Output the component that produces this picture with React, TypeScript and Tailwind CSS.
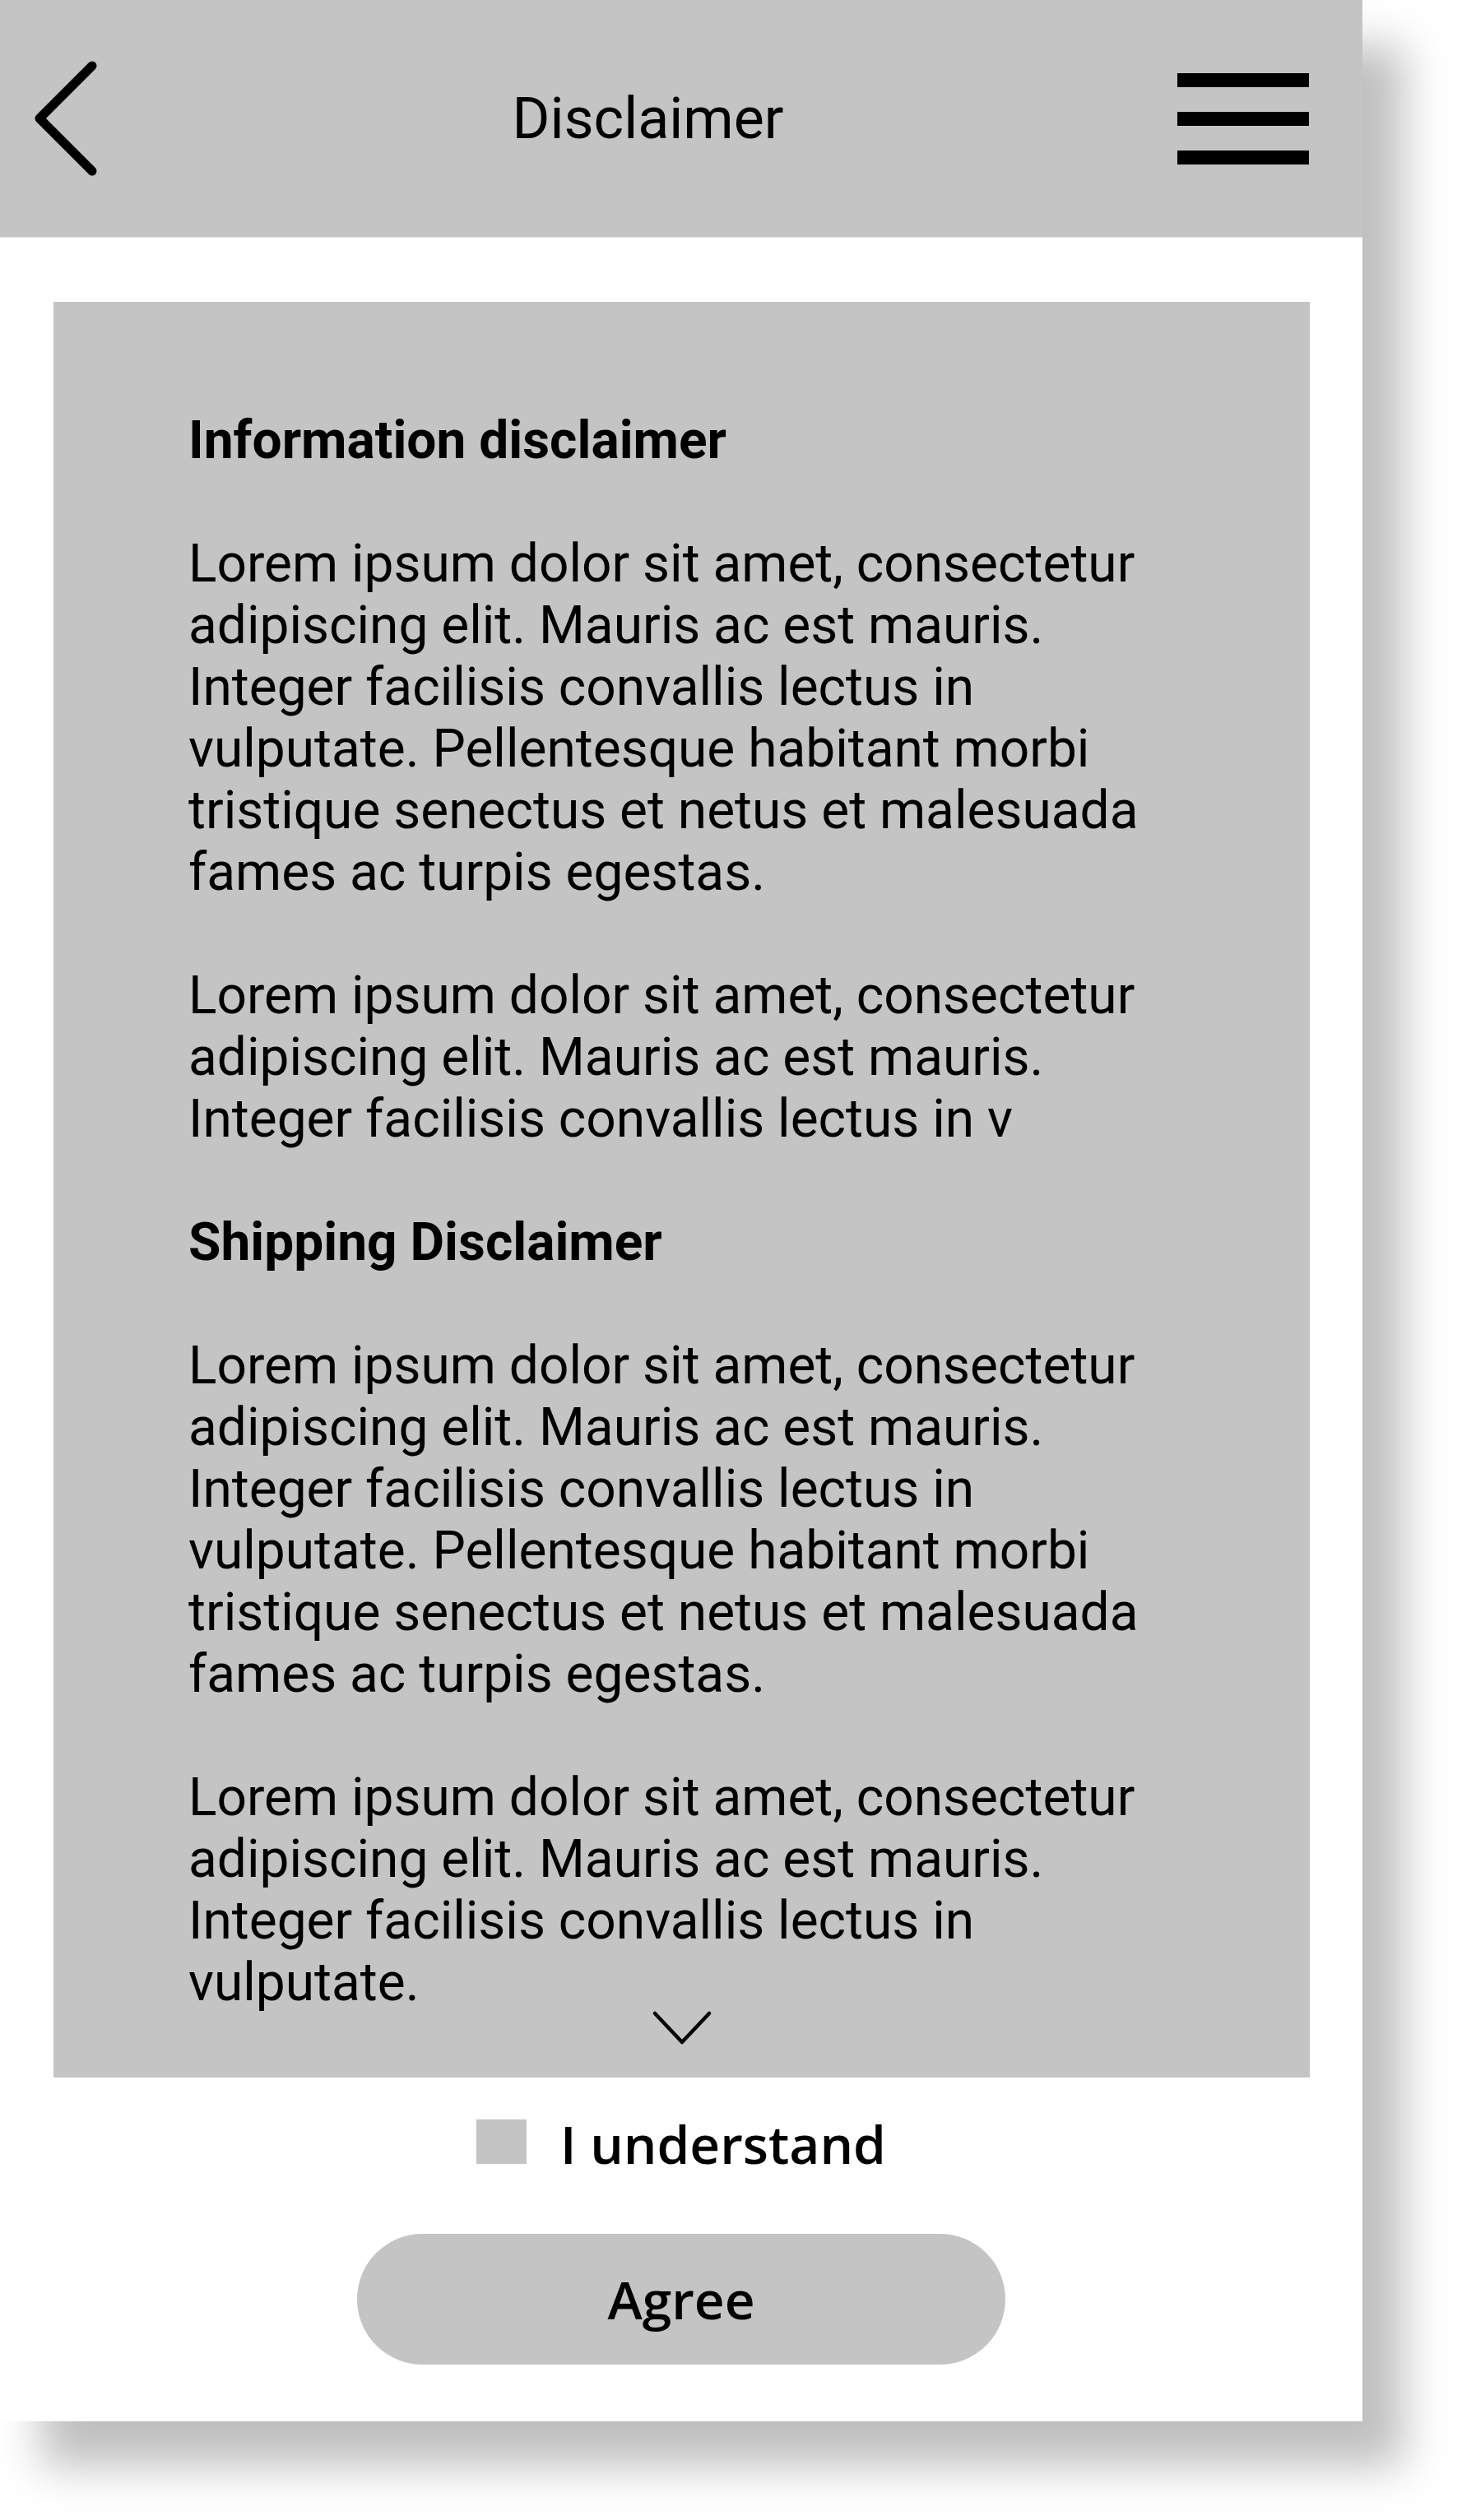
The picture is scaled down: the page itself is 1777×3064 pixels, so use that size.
import React from "react";

const Paragraph = ({ children }: { children: React.ReactNode }) => (
  <p className="text-[64px] leading-[75px] text-black">{children}</p>
);

const Heading = ({ children }: { children: React.ReactNode }) => (
  <h2 className="text-[64px] leading-[75px] font-bold text-black">{children}</h2>
);

export default function App() {
  return (
    <div className="w-[1777px] h-[3064px] bg-white overflow-hidden font-['Roboto',sans-serif]">
      <div className="w-[1656px] h-[2944px] bg-white flex flex-col shadow-[50px_55px_50px_rgba(0,0,0,0.25)]">
        {/* top bar */}
        <header className="h-[289px] shrink-0 bg-[#c4c4c4] flex items-center border-b border-[#e2e2e2]">
          <svg className="ml-[38px] shrink-0" width="84" height="146" viewBox="0 0 84 146" fill="none">
            <polyline points="74,9 10,73 74,137" stroke="black" strokeWidth="11" strokeLinecap="round" strokeLinejoin="round" />
          </svg>
          <h1 className="flex-1 pl-[22px] text-center text-[70px] text-black font-normal">Disclaimer</h1>
          <div className="mr-[65px] w-[160px] flex flex-col gap-[30px] shrink-0">
            <span className="block h-[17px] bg-black" />
            <span className="block h-[17px] bg-black" />
            <span className="block h-[17px] bg-black" />
          </div>
        </header>

        {/* scrolling text panel */}
        <div className="relative mt-[78px] ml-[65px] mr-[64px] h-[2159px] bg-[#c4c4c4] overflow-hidden">
          <div className="pt-[131px] px-[164px] flex flex-col gap-[75px]">
            <Heading>Information disclaimer</Heading>
            <Paragraph>
              Lorem ipsum dolor sit amet, consectetur adipiscing elit. Mauris ac est mauris. Integer facilisis convallis
              lectus in vulputate. Pellentesque habitant morbi tristique senectus et netus et malesuada fames ac turpis
              egestas.
            </Paragraph>
            <Paragraph>
              Lorem ipsum dolor sit amet, consectetur adipiscing elit. Mauris ac est mauris. Integer facilisis convallis
              lectus in v
            </Paragraph>
            <Heading>Shipping Disclaimer</Heading>
            <Paragraph>
              Lorem ipsum dolor sit amet, consectetur adipiscing elit. Mauris ac est mauris. Integer facilisis convallis
              lectus in vulputate. Pellentesque habitant morbi tristique senectus et netus et malesuada fames ac turpis
              egestas.
            </Paragraph>
            <Paragraph>
              Lorem ipsum dolor sit amet, consectetur adipiscing elit. Mauris ac est mauris. Integer facilisis convallis
              lectus in vulputate.
            </Paragraph>
          </div>
          <svg
            className="absolute left-1/2 -translate-x-1/2 bottom-[37px]"
            width="76"
            height="46"
            viewBox="0 0 76 46"
            fill="none"
          >
            <polyline points="5,5 38,40 71,5" stroke="black" strokeWidth="4.5" strokeLinecap="round" strokeLinejoin="round" />
          </svg>
        </div>

        {/* confirm */}
        <label className="mt-[33px] flex items-start justify-center gap-[41px] font-['Open_Sans',sans-serif]">
          <span className="block mt-[18px] w-[61px] h-[54px] bg-[#c4c4c4]" />
          <span className="text-[64px] font-semibold text-black">I understand</span>
        </label>

        <button className="mt-[61px] mx-auto w-[788px] h-[159px] rounded-full bg-[#c4c4c4] font-['Open_Sans',sans-serif] text-[64px] font-semibold text-black">
          Agree
        </button>
      </div>
    </div>
  );
}
